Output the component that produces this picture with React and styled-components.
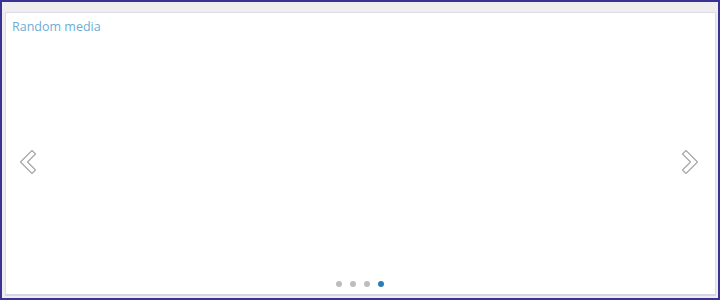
import styled, { createGlobalStyle } from 'styled-components'

const Global = createGlobalStyle`
  html, body {
    margin: 0;
    padding: 0;
    background: #fff;
  }
`

const Frame = styled.div`
  box-sizing: border-box;
  width: 720px;
  height: 300px;
  border: 2px solid #3b3393;
  background: #efedf0;
  padding: 10px 2px 2px 3px;
  display: flex;
`

const Panel = styled.section`
  box-sizing: border-box;
  flex: 1;
  background: #fff;
  border: 1px solid #dcdce4;
  border-bottom: 2px solid #d6d2ea;
  display: grid;
  grid-template-rows: auto 1fr auto;
  font-family: 'Open Sans', 'Noto Sans', sans-serif;
`

const Title = styled.h2`
  margin: 0;
  padding: 5px 0 0 6px;
  font-size: 12.5px;
  font-weight: 400;
  color: #6cadd6;
  line-height: 18px;
`

const Stage = styled.div`
  display: flex;
  align-items: center;
  justify-content: space-between;
  padding: 6px 15px 0 12px;
`

const NavButton = styled.button`
  border: 0;
  background: none;
  padding: 0;
  width: 19px;
  height: 26px;
  display: flex;
  cursor: pointer;
`

const Dots = styled.div`
  display: flex;
  justify-content: center;
  gap: 8px;
  padding: 0 1px 7px 0;
`

const Dot = styled.span`
  width: 6px;
  height: 6px;
  border-radius: 50%;
  background: ${({ active }) => (active ? '#2c7db4' : '#bdbdbd')};
`

const Chevron = ({ dir }) => (
  <svg width="19" height="26" viewBox="0 0 19 26">
    <polygon
      points={
        dir === 'left'
          ? '14,1.5 17.5,5 9.5,13 17.5,21 14,24.5 2.5,13'
          : '5,1.5 1.5,5 9.5,13 1.5,21 5,24.5 16.5,13'
      }
      fill="#fff"
      stroke="#a5a5a5"
      strokeWidth="1.1"
      strokeLinejoin="round"
    />
  </svg>
)

const slides = [0, 1, 2, 3]

export default function App() {
  const current = 3
  return (
    <>
      <Global />
      <Frame>
        <Panel>
          <Title>Random media</Title>
          <Stage>
            <NavButton aria-label="Previous">
              <Chevron dir="left" />
            </NavButton>
            <NavButton aria-label="Next">
              <Chevron dir="right" />
            </NavButton>
          </Stage>
          <Dots>
            {slides.map((i) => (
              <Dot key={i} active={i === current} />
            ))}
          </Dots>
        </Panel>
      </Frame>
    </>
  )
}
